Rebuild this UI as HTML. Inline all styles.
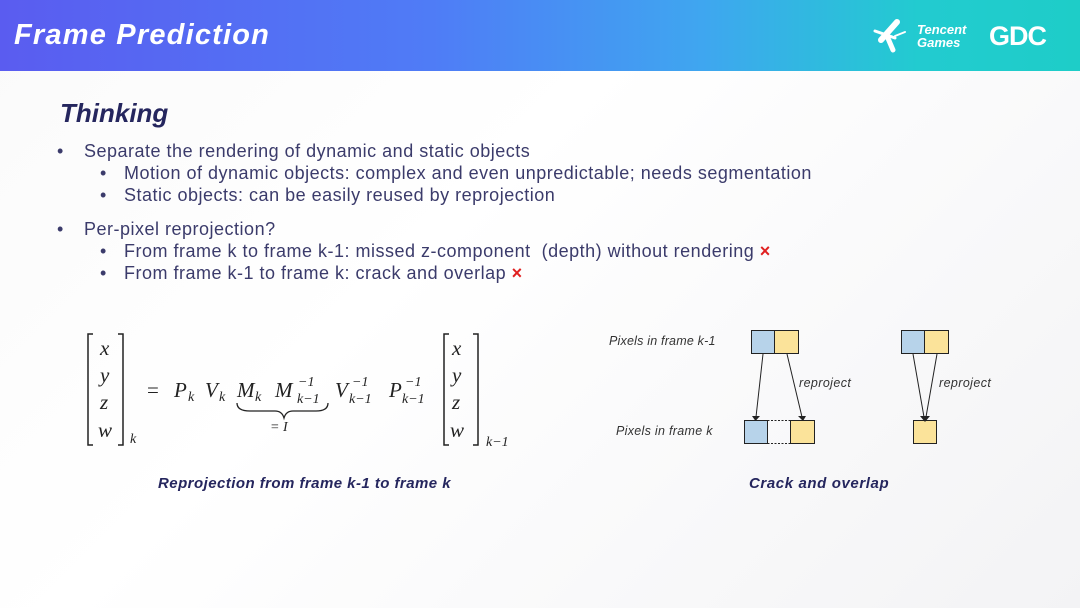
<!DOCTYPE html>
<html><head><meta charset="utf-8"><style>
body{margin:0;width:1080px;height:608px;overflow:hidden;position:relative;background:linear-gradient(135deg,#fafafa 0%,#ffffff 40%,#f3f3f5 100%);font-family:"Liberation Sans",sans-serif;color:#3b3b6b}
.hdr{position:absolute;left:0;top:0;width:1080px;height:71px;background:linear-gradient(90deg,#5a5cf0 0%,#4f7cf6 40%,#3fa6f0 65%,#22cbd0 85%,#1ecdc8 100%)}
.t{position:absolute;white-space:nowrap}
.m{font-family:"Liberation Serif",serif;font-style:italic;fill:#222}
</style></head><body>
<div class="hdr"></div>
<div class="t" style="left:14px;top:19px;font-size:29px;font-weight:bold;font-style:italic;color:#fff;letter-spacing:1.2px">Frame Prediction</div>
<svg class="t" style="left:873px;top:18px" width="45" height="36" viewBox="0 0 45 36"><g stroke="#fff" stroke-linecap="round" fill="none"><path d="M24 4 L8 22" stroke-width="6"/><path d="M2 13 L22 20" stroke-width="3"/><path d="M14 18 L20 32" stroke-width="5"/><path d="M22 18 L32 14" stroke-width="2"/></g></svg>
<div class="t" style="left:917px;top:23px;font-size:13px;line-height:13px;font-weight:bold;font-style:italic;color:#fff">Tencent<br>Games</div>
<div class="t" style="left:989px;top:21px;font-size:27px;font-weight:bold;color:#fff;letter-spacing:-1px">GDC</div>

<div class="t" style="left:60px;top:98px;font-size:26px;font-weight:bold;font-style:italic;color:#25265e">Thinking</div>
<div style="font-size:18px;letter-spacing:0.5px">
<div class="t" style="left:57px;top:141px">•</div><div class="t" style="left:84px;top:141px">Separate the rendering of dynamic and static objects</div>
<div class="t" style="left:100px;top:163px">•</div><div class="t" style="left:124px;top:163px">Motion of dynamic objects: complex and even unpredictable; needs segmentation</div>
<div class="t" style="left:100px;top:185px">•</div><div class="t" style="left:124px;top:185px">Static objects: can be easily reused by reprojection</div>
<div class="t" style="left:57px;top:219px">•</div><div class="t" style="left:84px;top:219px">Per-pixel reprojection?</div>
<div class="t" style="left:100px;top:241px">•</div><div class="t" style="left:124px;top:241px">From frame k to frame k-1: missed z-component &nbsp;(depth) without rendering <span style="color:#e02020;font-weight:bold">×</span></div>
<div class="t" style="left:100px;top:263px">•</div><div class="t" style="left:124px;top:263px">From frame k-1 to frame k: crack and overlap <span style="color:#e02020;font-weight:bold">×</span></div>
</div>

<svg class="t" style="left:80px;top:320px" width="450" height="140" viewBox="0 0 450 140">
<g stroke="#222" stroke-width="1.5" fill="none">
<path d="M13 14 H8 V125 H13"/><path d="M38 14 H43 V125 H38"/>
<path d="M369 14 H364 V125 H369"/><path d="M393 14 H398 V125 H393"/>
<path d="M157 83 Q157 91 170 91 L195 91 Q202 91 204 98 Q206 91 213 91 L236 91 Q248 91 248 83" stroke-width="1.3"/>
</g>
<g class="m" font-size="21">
<text x="20" y="35">x</text><text x="20" y="62">y</text><text x="20" y="89">z</text><text x="18" y="117">w</text>
<text x="372" y="35">x</text><text x="372" y="62">y</text><text x="372" y="89">z</text><text x="370" y="117">w</text>
<text x="67" y="77" font-style="normal">=</text>
<text x="94" y="77">P</text><text x="125" y="77">V</text><text x="157" y="77">M</text><text x="195" y="77">M</text>
<text x="255" y="77">V</text><text x="309" y="77">P</text>
</g>
<g class="m" font-size="14">
<text x="50" y="123">k</text><text x="108" y="81">k</text><text x="139" y="81">k</text><text x="175" y="81">k</text>
<text x="218" y="66">−1</text><text x="217" y="83">k−1</text>
<text x="272" y="66">−1</text><text x="269" y="83">k−1</text>
<text x="325" y="66">−1</text><text x="322" y="83">k−1</text>
<text x="190" y="111">= I</text>
<text x="406" y="126">k−1</text>
</g>
</svg>
<div class="t" style="left:158px;top:475px;font-size:15px;font-weight:bold;font-style:italic;color:#25265e;letter-spacing:0.45px">Reprojection from frame k-1 to frame k</div>
<div class="t" style="left:749px;top:475px;font-size:15px;font-weight:bold;font-style:italic;color:#25265e;letter-spacing:0.6px">Crack and overlap</div>

<svg class="t" style="left:600px;top:320px" width="420" height="130" viewBox="0 0 420 130">
<g font-family="Liberation Sans" font-style="italic" font-size="12.5" fill="#333">
<text x="9" y="25" letter-spacing="0.2">Pixels in frame k-1</text><text x="16" y="115" letter-spacing="0.3">Pixels in frame k</text>
<text x="199" y="67" letter-spacing="0.4">reproject</text><text x="339" y="67" letter-spacing="0.4">reproject</text>
</g>
<g stroke="#222" stroke-width="1">
<rect x="151.5" y="10.5" width="23" height="23" fill="#b7d3ea"/><rect x="174.5" y="10.5" width="24" height="23" fill="#fbe39a"/>
<rect x="301.5" y="10.5" width="23" height="23" fill="#b7d3ea"/><rect x="324.5" y="10.5" width="24" height="23" fill="#fbe39a"/>
<rect x="144.5" y="100.5" width="23" height="23" fill="#b7d3ea"/><rect x="190.5" y="100.5" width="24" height="23" fill="#fbe39a"/>
<path d="M167.5 100.5 H190.5 M167.5 123.5 H190.5" stroke-dasharray="2 1.5"/>
<rect x="313.5" y="100.5" width="23" height="23" fill="#fbe39a"/>
<path d="M163 34 L156 97 M187 34 L202 97 M313 34 L324 97 M337 34 L326 97"/>
</g>
<g fill="#222"><path d="M152 96 L160 96 L155.5 101Z"/><path d="M198 96 L206 96 L203 101Z"/><path d="M320 96 L330 96 L325 102Z"/></g>
</svg>
</body></html>
